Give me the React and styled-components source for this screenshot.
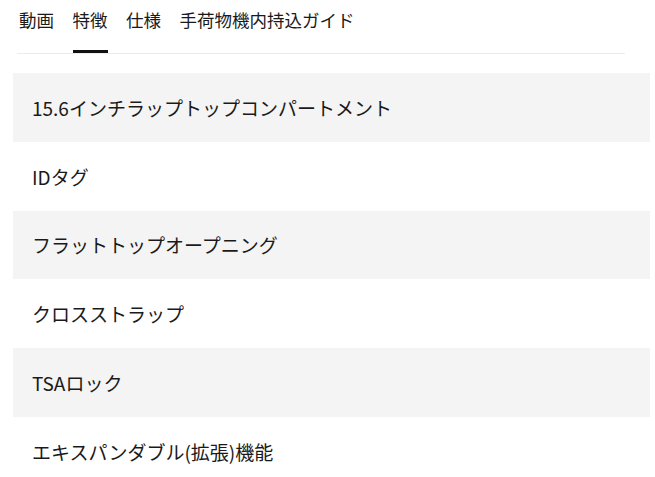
import styled, { createGlobalStyle } from "styled-components"

const Global = createGlobalStyle`
  body { margin: 0; background: #fff; font-family: "Noto Sans CJK JP", "Noto Sans", sans-serif; color: #1a1a1a; }
`

const Page = styled.main`padding: 0 5px 0 13px;`

const TabBar = styled.nav`display: flex; gap: 18.5px; margin: 0 25px 0 4px; padding-left: 2px; border-bottom: 1px solid #ececec;`

const Tab = styled.div`
  box-sizing: border-box; height: 53px; padding-top: 8px;
  font-size: 17.5px; line-height: 24px; white-space: nowrap;
  border-bottom: 3px solid ${(p) => (p.$active ? "#111" : "transparent")};
`

const List = styled.ul`list-style: none; margin: 19px 0 0; padding: 0;`

const Row = styled.li`
  box-sizing: border-box; height: 68.8px; display: flex; align-items: center;
  padding-left: 19px; font-size: 19px; background: ${(p) => (p.$shade ? "#f4f4f4" : "#fff")};
`

const tabs = ["動画", "特徴", "仕様", "手荷物機内持込ガイド"]
const items = [
  "15.6インチラップトップコンパートメント",
  "IDタグ",
  "フラットトップオープニング",
  "クロスストラップ",
  "TSAロック",
  "エキスパンダブル(拡張)機能",
]

export default function App() {
  return (
    <Page>
      <Global />
      <TabBar>
        {tabs.map((t, i) => (
          <Tab key={t} $active={i === 1}>{t}</Tab>
        ))}
      </TabBar>
      <List>
        {items.map((t, i) => (
          <Row key={t} $shade={i % 2 === 0}>{t}</Row>
        ))}
      </List>
    </Page>
  )
}
